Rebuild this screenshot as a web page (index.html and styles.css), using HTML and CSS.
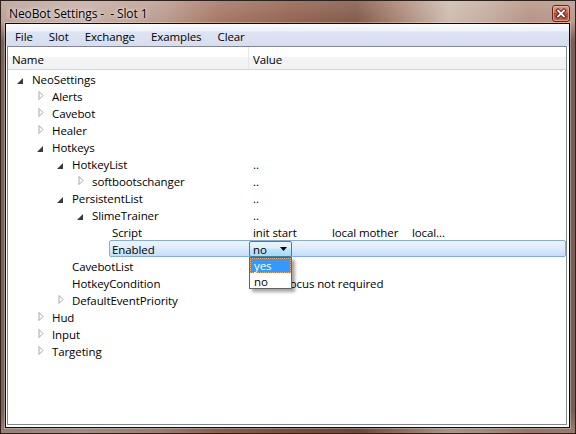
FILE: index.html
```html
<!DOCTYPE html>
<html>
<head>
<meta charset="utf-8">
<link rel="stylesheet" href="styles.css">
</head>
<body>
<div class="window">
  <div class="titlebar">
    <span class="title">NeoBot Settings -  - Slot 1</span>
    <span class="close">
      <svg width="18" height="17" viewBox="0 0 18 17">
        <defs>
          <linearGradient id="cg" x1="0" y1="0" x2="0" y2="1">
            <stop offset="0" stop-color="#e9a08c"/>
            <stop offset="0.45" stop-color="#d7664b"/>
            <stop offset="0.5" stop-color="#c7452b"/>
            <stop offset="1" stop-color="#d0603e"/>
          </linearGradient>
        </defs>
        <rect x="0.5" y="0.5" width="17" height="16" rx="2.5" fill="url(#cg)" stroke="#5a2a20"/>
        <rect x="1.5" y="1.5" width="15" height="14" rx="1.5" fill="none" stroke="#f4c0b0" stroke-opacity="0.6"/>
        <path d="M6 5.5 L12 11.5 M12 5.5 L6 11.5" stroke="#3a2420" stroke-width="3.6" stroke-linecap="square"/>
        <path d="M6 5.5 L12 11.5 M12 5.5 L6 11.5" stroke="#ffffff" stroke-width="1.8" stroke-linecap="square"/>
      </svg>
    </span>
  </div>
  <div class="client">
    <div class="menubar">
      <span class="mi">File</span>
      <span class="mi">Slot</span>
      <span class="mi">Exchange</span>
      <span class="mi">Examples</span>
      <span class="mi">Clear</span>
    </div>
    <div class="tree">
      <div class="header">
        <div class="hc hname">Name</div>
        <div class="hc hvalue">Value</div>
      </div>
      <div class="rows">
        <div class="row l0"><span class="ind"></span><span class="tg"><svg class="ex" width="6" height="6"><path d="M6 0 V6 H0 Z" fill="#3a3a3a"/></svg></span><div class="cell"><span class="nm">NeoSettings</span><span class="val"></span></div></div>
        <div class="row l1"><span class="ind"></span><span class="tg"><svg class="co" width="6" height="9"><path d="M1 0.5 L5 4.5 L1 8.5 Z" fill="#fff" stroke="#a6a6a6"/></svg></span><div class="cell"><span class="nm">Alerts</span><span class="val"></span></div></div>
        <div class="row l1"><span class="ind"></span><span class="tg"><svg class="co" width="6" height="9"><path d="M1 0.5 L5 4.5 L1 8.5 Z" fill="#fff" stroke="#a6a6a6"/></svg></span><div class="cell"><span class="nm">Cavebot</span><span class="val"></span></div></div>
        <div class="row l1"><span class="ind"></span><span class="tg"><svg class="co" width="6" height="9"><path d="M1 0.5 L5 4.5 L1 8.5 Z" fill="#fff" stroke="#a6a6a6"/></svg></span><div class="cell"><span class="nm">Healer</span><span class="val"></span></div></div>
        <div class="row l1"><span class="ind"></span><span class="tg"><svg class="ex" width="6" height="6"><path d="M6 0 V6 H0 Z" fill="#3a3a3a"/></svg></span><div class="cell"><span class="nm">Hotkeys</span><span class="val"></span></div></div>
        <div class="row l2"><span class="ind"></span><span class="tg"><svg class="ex" width="6" height="6"><path d="M6 0 V6 H0 Z" fill="#3a3a3a"/></svg></span><div class="cell"><span class="nm">HotkeyList</span><span class="val">..</span></div></div>
        <div class="row l3"><span class="ind"></span><span class="tg"><svg class="co" width="6" height="9"><path d="M1 0.5 L5 4.5 L1 8.5 Z" fill="#fff" stroke="#a6a6a6"/></svg></span><div class="cell"><span class="nm">softbootschanger</span><span class="val">..</span></div></div>
        <div class="row l2"><span class="ind"></span><span class="tg"><svg class="ex" width="6" height="6"><path d="M6 0 V6 H0 Z" fill="#3a3a3a"/></svg></span><div class="cell"><span class="nm">PersistentList</span><span class="val">..</span></div></div>
        <div class="row l3"><span class="ind"></span><span class="tg"><svg class="ex" width="6" height="6"><path d="M6 0 V6 H0 Z" fill="#3a3a3a"/></svg></span><div class="cell"><span class="nm">SlimeTrainer</span><span class="val">..</span></div></div>
        <div class="row l4"><span class="ind"></span><span class="tg"></span><div class="cell"><span class="nm">Script</span><span class="val"><span class="tab">init start</span><span class="tab">local mother</span><span>local...</span></span></div></div>
        <div class="row l4"><span class="ind"></span><span class="tg"></span><div class="cell sel"><span class="nm">Enabled</span><span class="val"><span class="combo"><span class="ctext">no</span><svg class="carrow" width="7" height="4"><path d="M0 0 H7 L3.5 4 Z" fill="#000"/></svg><span class="popup"><span class="opt hi">yes</span><span class="opt">no</span></span></span></span></div></div>
        <div class="row l2"><span class="ind"></span><span class="tg"></span><div class="cell"><span class="nm">CavebotList</span><span class="val"></span></div></div>
        <div class="row l2"><span class="ind"></span><span class="tg"></span><div class="cell"><span class="nm">HotkeyCondition</span><span class="val">Client focus not required</span></div></div>
        <div class="row l2"><span class="ind"></span><span class="tg"><svg class="co" width="6" height="9"><path d="M1 0.5 L5 4.5 L1 8.5 Z" fill="#fff" stroke="#a6a6a6"/></svg></span><div class="cell"><span class="nm">DefaultEventPriority</span><span class="val"></span></div></div>
        <div class="row l1"><span class="ind"></span><span class="tg"><svg class="co" width="6" height="9"><path d="M1 0.5 L5 4.5 L1 8.5 Z" fill="#fff" stroke="#a6a6a6"/></svg></span><div class="cell"><span class="nm">Hud</span><span class="val"></span></div></div>
        <div class="row l1"><span class="ind"></span><span class="tg"><svg class="co" width="6" height="9"><path d="M1 0.5 L5 4.5 L1 8.5 Z" fill="#fff" stroke="#a6a6a6"/></svg></span><div class="cell"><span class="nm">Input</span><span class="val"></span></div></div>
        <div class="row l1"><span class="ind"></span><span class="tg"><svg class="co" width="6" height="9"><path d="M1 0.5 L5 4.5 L1 8.5 Z" fill="#fff" stroke="#a6a6a6"/></svg></span><div class="cell"><span class="nm">Targeting</span><span class="val"></span></div></div>
      </div>
    </div>
  </div>
</div>
</body>
</html>
```

FILE: styles.css
```css
* { box-sizing: border-box; }

body {
  margin: 0;
  font-family: "Open Sans", "Noto Sans", sans-serif;
  font-size: 11.5px;
  letter-spacing: -0.1px;
  color: #000;
}

.window {
  width: 576px;
  height: 434px;
  display: flex;
  flex-direction: column;
  border: 1px solid #2e201a;
  background:
    linear-gradient(180deg, rgba(0,0,0,0) 0, rgba(0,0,0,0) 22px, rgba(50,28,20,0.45) 40px, rgba(50,28,20,0.45) 410px, rgba(50,28,20,0.2) 100%),
    linear-gradient(90deg,
      #b69c92 0%, #c2aba0 14%, #b8978a 28%, #a0705c 38%, #8e5c48 50%,
      #7c5242 62%, #a98473 70%, #cbb8a9 78%, #c3aa9b 84%, #b38e7f 92%, #b49589 100%);
}

.titlebar {
  height: 22px;
  display: flex;
  align-items: flex-start;
  background: linear-gradient(180deg, rgba(255,255,255,0.18), rgba(255,255,255,0.05));
}

.title {
  white-space: pre;
  font-size: 12px;
  padding: 4px 0 0 8px;
  line-height: 17px;
  text-shadow: 0 0 6px rgba(255,255,255,0.9), 0 0 3px rgba(255,255,255,0.7);
}

.close {
  margin: 4px 5px 0 auto;
  display: block;
  height: 17px;
}
.close svg { display: block; }

.client {
  flex: 1;
  margin: 0 5px 5px 4px;
  border: 1px solid #0c0c0c;
  background: #fff;
  display: flex;
  flex-direction: column;
  box-shadow: 0 0 0 1px rgba(255,255,255,0.3);
}

.menubar {
  height: 22px;
  display: flex;
  align-items: flex-start;
  padding-left: 1px;
  background: linear-gradient(180deg, #fbfcfe 0%, #eef2f9 32%, #dde5f4 36%, #d5deef 100%);
}

.mi {
  padding: 0 8px;
  line-height: 18px;
  margin-top: 4px;
}

.tree {
  flex: 1;
  margin: 0 2px 2px 1px;
  border: 1px solid #828790;
  background: #fff;
  display: flex;
  flex-direction: column;
}

.header {
  height: 23px;
  display: flex;
  border-bottom: 1px solid #d5d5d5;
  background: linear-gradient(180deg, #ffffff 0%, #ffffff 45%, #f3f4f6 46%, #f1f2f4 100%);
}

.hc {
  line-height: 18px;
  padding: 4px 0 0 4px;
}
.hname {
  width: 241px;
  border-right: 1px solid #e3e6eb;
}
.hvalue { flex: 1; }

.rows {
  flex: 1;
  display: flex;
  flex-direction: column;
}

.row {
  height: 17px;
  display: flex;
  line-height: 15px;
}

.ind { flex: none; }
.tg { flex: none; width: 16px; }
.tg svg { display: block; }
.tg .ex { margin: 8px 0 0 1px; }
.tg .co { margin: 4px 0 0 2px; }

.l0 .ind { width: 8px; }
.l1 .ind { width: 28px; }
.l2 .ind { width: 48px; }
.l3 .ind { width: 68px; }
.l4 .ind { width: 88px; }

.l0 .nm { width: 217px; }
.l1 .nm { width: 197px; }
.l2 .nm { width: 177px; }
.l3 .nm { width: 157px; }
.l4 .nm { width: 137px; }

.cell {
  flex: 1;
  display: flex;
  margin-left: -3px;
  padding-left: 2px;
  border: 1px solid transparent;
  border-radius: 2px;
  white-space: nowrap;
}

.cell.sel {
  border-color: #84acdd;
  background: linear-gradient(180deg, #eef5fd 0%, #dcebfc 50%, #c5dcf8 100%);
}

.nm {
  flex: none;
  padding-top: 1px;
}

.val {
  flex: 1;
  padding: 1px 0 0 4px;
}

.tab {
  display: inline-block;
  width: 79px;
}
.tab + .tab { width: 80px; }

.combo {
  position: relative;
  display: flex;
  align-items: center;
  margin: -1px 0 0 -4px;
  width: 43px;
  height: 16px;
  border: 1px solid #3c7fb1;
  border-radius: 2px;
  background: linear-gradient(180deg, #eaf6fd 0%, #d9f0fc 45%, #bee6fd 50%, #a7d9f5 100%);
}

.ctext {
  padding: 1px 0 0 3px;
  line-height: 13px;
  flex: 1;
}

.carrow {
  display: block;
  margin-right: 4px;
}

.popup {
  position: absolute;
  top: 15px;
  left: -1px;
  width: 43px;
  height: 32px;
  border: 1px solid #646464;
  background: #fff;
  display: flex;
  flex-direction: column;
  box-shadow: 3px 3px 3px rgba(0,0,0,0.35);
}

.opt {
  height: 15px;
  line-height: 13px;
  padding: 1px 0 0 3px;
  border: 1px solid transparent;
}

.opt.hi {
  background: #3399ff;
  color: #fff;
  border: 1px dotted #f0a860;
  padding-top: 0;
}
```
